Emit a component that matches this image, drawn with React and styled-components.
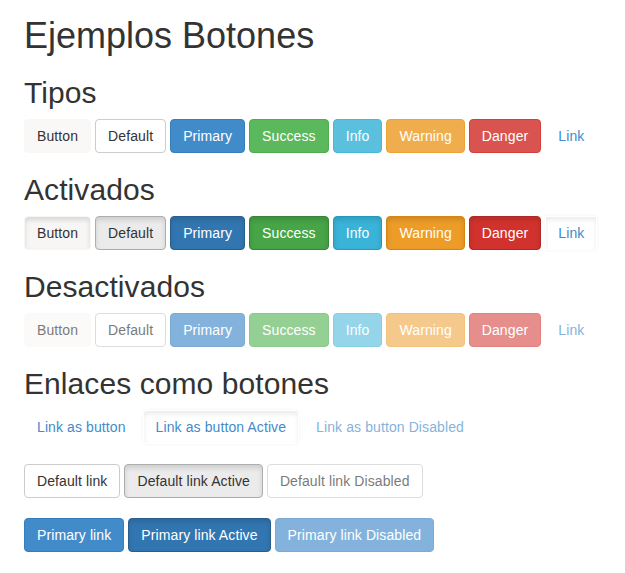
import styled, { createGlobalStyle, css } from "styled-components";

const GlobalStyle = createGlobalStyle`
  html, body {
    margin: 0;
    padding: 0;
    background: #fff;
  }
  body {
    font-family: "Liberation Sans", Arial, sans-serif;
    font-size: 14px;
    line-height: 1.42857;
    color: #333;
  }
`;

const variants = {
  plain: { bg: "#f9f8f7", border: "#f9f8f7", color: "#333", activeBg: "#f7f6f5", activeBorder: "#f7f6f5" },
  default: { bg: "#fff", border: "#ccc", color: "#333", activeBg: "#ebebeb", activeBorder: "#adadad" },
  primary: { bg: "#428bca", border: "#357ebd", color: "#fff", activeBg: "#3276b1", activeBorder: "#285e8e" },
  success: { bg: "#5cb85c", border: "#4cae4c", color: "#fff", activeBg: "#47a447", activeBorder: "#398439" },
  info: { bg: "#5bc0de", border: "#46b8da", color: "#fff", activeBg: "#39b3d7", activeBorder: "#269abc" },
  warning: { bg: "#f0ad4e", border: "#eea236", color: "#fff", activeBg: "#ed9c28", activeBorder: "#d58512" },
  danger: { bg: "#d9534f", border: "#d43f3a", color: "#fff", activeBg: "#d2322d", activeBorder: "#ac2925" },
  link: { bg: "transparent", border: "transparent", color: "#428bca", activeBg: "transparent", activeBorder: "transparent" },
};

const Page = styled.div`
  padding: 0 24px;
`;

const Title = styled.h1`
  font-size: 36px;
  font-weight: 500;
  line-height: 1.1;
  margin: 16px 0 10px;
`;

const Section = styled.h2`
  font-size: 30px;
  font-weight: 500;
  line-height: 1.1;
  letter-spacing: 0.08px;
  margin: 20px 0 10px;
`;

const Row = styled.div`
  display: flex;
  gap: 4px;
  margin-bottom: ${(p) => p.$mb || 0}px;
`;

const Btn = styled.span`
  display: inline-block;
  box-sizing: border-box;
  height: 34px;
  padding: 6px 12px;
  font-size: 14px;
  line-height: 20px;
  letter-spacing: 0.1px;
  white-space: nowrap;
  border: 1px solid ${(p) => variants[p.$v].border};
  border-radius: ${(p) => (p.$square ? 0 : 4)}px;
  background: ${(p) => variants[p.$v].bg};
  color: ${(p) => variants[p.$v].color};
  cursor: pointer;

  ${(p) =>
    p.$active &&
    css`
      background: ${variants[p.$v].activeBg};
      border-color: ${variants[p.$v].activeBorder};
      box-shadow: inset 0 3px 5px rgba(0, 0, 0, 0.125);
    `}

  ${(p) =>
    p.$active &&
    p.$v === "link" &&
    css`
      box-shadow: inset 0 3px 5px rgba(0, 0, 0, 0.08), 0 0 3px rgba(0, 0, 0, 0.06);
    `}

  ${(p) =>
    p.$disabled &&
    css`
      opacity: 0.65;
      cursor: not-allowed;
    `}
`;

const types = [
  ["plain", "Button"],
  ["default", "Default"],
  ["primary", "Primary"],
  ["success", "Success"],
  ["info", "Info"],
  ["warning", "Warning"],
  ["danger", "Danger"],
  ["link", "Link"],
];

function ButtonRow({ active, disabled }) {
  return (
    <Row>
      {types.map(([v, label]) => (
        <Btn
          key={v}
          $v={v}
          $active={active}
          $disabled={disabled}
          $square={active && v === "link"}
        >
          {label}
        </Btn>
      ))}
    </Row>
  );
}

export default function App() {
  return (
    <Page>
      <GlobalStyle />
      <Title>Ejemplos Botones</Title>
      <Section>Tipos</Section>
      <ButtonRow />
      <Section>Activados</Section>
      <ButtonRow active />
      <Section>Desactivados</Section>
      <ButtonRow disabled />
      <Section>Enlaces como botones</Section>
      <Row $mb={20}>
        <Btn $v="link">Link as button</Btn>
        <Btn $v="link" $active>Link as button Active</Btn>
        <Btn $v="link" $disabled>Link as button Disabled</Btn>
      </Row>
      <Row $mb={20}>
        <Btn $v="default">Default link</Btn>
        <Btn $v="default" $active>Default link Active</Btn>
        <Btn $v="default" $disabled>Default link Disabled</Btn>
      </Row>
      <Row>
        <Btn $v="primary">Primary link</Btn>
        <Btn $v="primary" $active>Primary link Active</Btn>
        <Btn $v="primary" $disabled>Primary link Disabled</Btn>
      </Row>
    </Page>
  );
}
